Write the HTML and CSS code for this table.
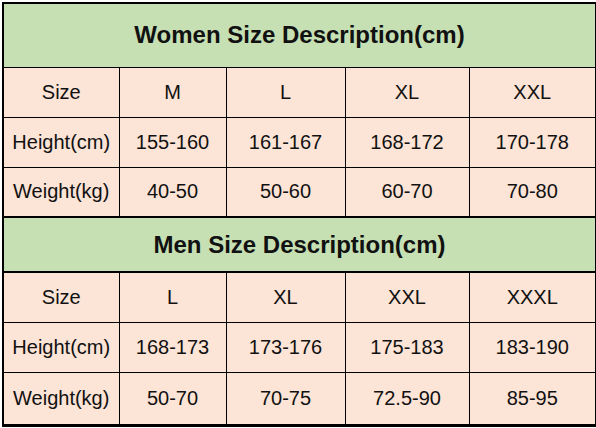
FILE: index.html
```html
<!DOCTYPE html>
<html lang="en">
<head>
  <meta charset="UTF-8">
  <title>Size Description</title>
  <link rel="stylesheet" href="styles.css">
</head>
<body>

  <table class="size-table">
    <colgroup>
      <col class="col-label">
      <col class="col-a">
      <col class="col-b">
      <col class="col-c">
      <col class="col-d">
    </colgroup>

    <!-- Women -->
    <tr class="title-row">
      <td colspan="5">Women Size Description(cm)</td>
    </tr>
    <tr class="data-row">
      <td>Size</td><td>M</td><td>L</td><td>XL</td><td>XXL</td>
    </tr>
    <tr class="data-row">
      <td>Height(cm)</td><td>155-160</td><td>161-167</td><td>168-172</td><td>170-178</td>
    </tr>
    <tr class="data-row">
      <td>Weight(kg)</td><td>40-50</td><td>50-60</td><td>60-70</td><td>70-80</td>
    </tr>

    <!-- Men -->
    <tr class="title-row men">
      <td colspan="5">Men Size Description(cm)</td>
    </tr>
    <tr class="data-row">
      <td>Size</td><td>L</td><td>XL</td><td>XXL</td><td>XXXL</td>
    </tr>
    <tr class="data-row">
      <td>Height(cm)</td><td>168-173</td><td>173-176</td><td>175-183</td><td>183-190</td>
    </tr>
    <tr class="data-row last">
      <td>Weight(kg)</td><td>50-70</td><td>70-75</td><td>72.5-90</td><td>85-95</td>
    </tr>
  </table>

</body>
</html>
```

FILE: styles.css
```css
* { box-sizing: border-box; margin: 0; padding: 0; }

body {
  background: #fff;
  padding: 2px 0 0 2px;
  font-family: "Liberation Sans", Arial, sans-serif;
  color: #111;
}

.size-table {
  width: 593px;
  border-collapse: collapse;
  border: 2px solid #000;
  table-layout: fixed;
}

.col-label { width: 116px; }
.col-a { width: 107px; }
.col-b { width: 119px; }
.col-c { width: 124px; }
.col-d { width: 127px; }

.size-table td {
  border: 1px solid #000;
  text-align: center;
  vertical-align: middle;
  white-space: nowrap;
}

.title-row td {
  height: 64px;
  background-color: #c6e0b4;
  font-size: 24px;
  font-weight: bold;
}

.title-row.men td {
  height: 55px;
  border-top: 2px solid #000;
  border-bottom: 2px solid #000;
}

.data-row td {
  height: 50px;
  background-color: #fce4d6;
  font-size: 20px;
}

.data-row.last td {
  height: 53px;
  border-bottom: 3px solid #000;
}
```
